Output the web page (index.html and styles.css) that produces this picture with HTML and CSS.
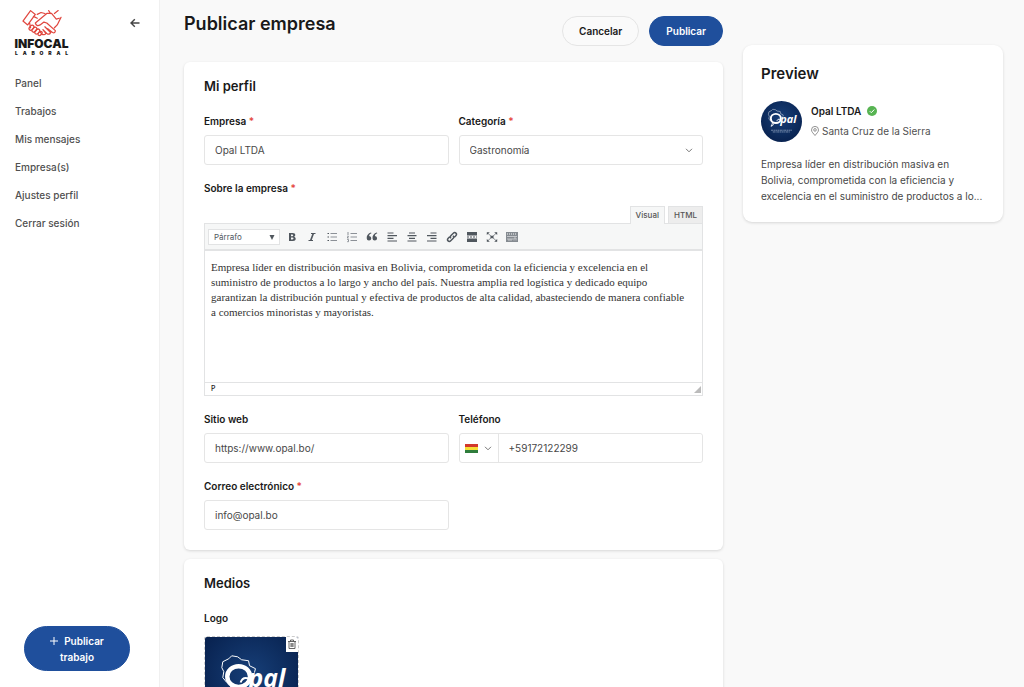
FILE: index.html
```html
<!DOCTYPE html>
<html lang="es">
<head>
<meta charset="utf-8">
<meta name="viewport" content="width=device-width, initial-scale=1">
<title>Publicar empresa</title>
<link rel="stylesheet" href="styles.css">
</head>
<body>
<svg class="defs" aria-hidden="true">
  <defs>
    <radialGradient id="navy" cx="50%" cy="40%" r="65%">
      <stop offset="0" stop-color="#173f78"/>
      <stop offset="1" stop-color="#07204d"/>
    </radialGradient>
    <symbol id="opal" viewBox="0 0 94 94">
      <rect width="94" height="94" fill="url(#navy)"/>
      <path d="M22 46l-4-5 1-6-2-4 1-6 6-3 3-3 6 1 4 3 7 1 1 5 6 3-1 4" fill="none" stroke="#fff" stroke-width="1"/>
      <ellipse cx="34" cy="40" rx="11.500" ry="10.500" fill="none" stroke="#fff" stroke-width="4.500"/>
      <path d="M27 49q-2 5-4 9 5-1 6-6M36 46q2-6 8-4" fill="none" stroke="#fff" stroke-width="2"/>
      <text x="44" y="51" class="opal-word">pal</text>
      <path d="M23 67h48M27 71h40" stroke="#a9b8d0" stroke-width="1.5" stroke-dasharray="5 1 3 1"/>
    </symbol>
  </defs>
</svg>
<div class="app">
  <aside class="sidebar">
    <div class="sidebar-head">
      <a class="brand" href="#" aria-label="Infocal Laboral">
        <svg class="brand-mark" viewBox="0 0 42 28" fill="none" stroke="#e0473f" stroke-width="1.3" stroke-linejoin="round" stroke-linecap="round">
          <path d="M9 1l5 4-8 11-5-4zM12 7l4 2M8 14l1 5M16 5l4-2 4 1M20 9l-6 5q1 4 5 2l4-3 3 1 9 8q0 3-3 2l-5-4M20 9l6-5 5 0 5 6 3-1M30 4l-2-3M41 8l-4 8-3 3M34 4l4-3M24 18l6 6q-1 3-4 1l-4-4M22 21l3 4q-1 2-4 1l-2-3"/>
          <ellipse cx="10" cy="19" rx="2" ry="3" transform="rotate(45 10 19)"/>
          <ellipse cx="13" cy="21" rx="2" ry="3" transform="rotate(45 13 21)"/>
          <ellipse cx="16" cy="23" rx="2" ry="3" transform="rotate(45 16 23)"/>
          <ellipse cx="19" cy="25" rx="1.6" ry="2.5" transform="rotate(45 19 25)"/>
        </svg>
        <span class="brand-name">INFOCAL</span>
        <span class="brand-sub"><span>L</span><span>A</span><span>B</span><span>O</span><span>R</span><span>A</span><span>L</span></span>
      </a>
      <button class="collapse" type="button" aria-label="Contraer menú">
        <svg viewBox="0 0 10 10" fill="none" stroke="currentColor" stroke-width="1.4"><path d="M9.5 5H1M4.8 1.2L1 5l3.8 3.8"/></svg>
      </button>
    </div>
    <nav class="menu">
      <a href="#">Panel</a>
      <a href="#">Trabajos</a>
      <a href="#">Mis mensajes</a>
      <a href="#">Empresa(s)</a>
      <a href="#">Ajustes perfil</a>
      <a href="#">Cerrar sesión</a>
    </nav>
    <button class="btn primary post-job" type="button">
      <svg viewBox="0 0 8 8" fill="none" stroke="currentColor"><path d="M4 0v8M0 4h8"/></svg>Publicar trabajo
    </button>
  </aside>

  <main class="main">
    <form class="editor-column">
      <header class="page-head">
        <h1>Publicar empresa</h1>
        <div class="actions">
          <button class="btn outline" type="button">Cancelar</button>
          <button class="btn primary" type="submit">Publicar</button>
        </div>
      </header>

      <section class="card">
        <h2>Mi perfil</h2>
        <div class="fields">
          <div class="field">
            <label for="empresa">Empresa <span class="req">*</span></label>
            <input id="empresa" class="control" type="text" value="Opal LTDA">
          </div>
          <div class="field">
            <label for="categoria">Categoría <span class="req">*</span></label>
            <div class="select-wrap">
              <select id="categoria" class="control"><option>Gastronomía</option></select>
              <svg class="chevron" viewBox="0 0 8 5" fill="none" stroke="#777"><path d="M1 .8l3 3 3-3"/></svg>
            </div>
          </div>
          <div class="field wide">
            <label for="sobre" id="sobre-label">Sobre la empresa <span class="req">*</span></label>
            <div class="rich">
              <div class="tabs">
                <button class="tab active" type="button">Visual</button>
                <button class="tab" type="button">HTML</button>
              </div>
              <div class="frame">
                <div class="toolbar">
                  <div class="select-wrap">
                    <select class="format" aria-label="Formato"><option>Párrafo</option></select>
                    <svg class="caret" viewBox="0 0 6 5" fill="#50575e"><path d="M.5 0h5L3 5z"/></svg>
                  </div>
                  <button type="button" aria-label="Negrita"><svg viewBox="0 0 12 12"><path class="f" fill-rule="evenodd" d="M3 2h3.800C8.400 2 9.300 2.700 9.300 4c0 .9-.5 1.500-1.300 1.800 1 .3 1.700 1 1.700 2C9.700 9.300 8.600 10 7 10H3zM5 3.500v1.700h1.200c1.400 0 1.400-1.700 0-1.700zM5 6.600v1.900h1.400c1.500 0 1.500-1.900 0-1.900z"/></svg></button>
                  <button type="button" aria-label="Cursiva"><svg viewBox="0 0 12 12"><path class="s" d="M5 2.500h4.500M2.500 9.500H7"/><path class="s thick" d="M7.300 2.500l-2.600 7"/></svg></button>
                  <button type="button" aria-label="Lista"><svg viewBox="0 0 12 12"><path class="s light" d="M4.500 2.500H11M4.500 6H11M4.500 9.500H11"/><path class="s" d="M1.500 2.500h1.500M1.500 6h1.500M1.500 9.500h1.500"/></svg></button>
                  <button type="button" aria-label="Lista numerada"><svg viewBox="0 0 12 12"><path class="s light" d="M4.500 2.500H11M4.500 6H11M4.500 9.500H11M2 1v3M1.200 5.200h1.300L1.200 7h1.500M1.200 8.500h1.300v2.200H1.200"/></svg></button>
                  <button type="button" aria-label="Cita"><svg viewBox="0 0 12 12"><path class="f" d="M5.500 2.300C4 2.800 3.300 3.700 3.100 4.900a2.300 2.300 0 1 1-2.400 2.300C.5 4.500 2.200 2.300 5 1.500zM11.300 2.300C9.800 2.800 9.100 3.700 8.900 4.900a2.300 2.300 0 1 1-2.400 2.300C6.300 4.500 8 2.300 10.800 1.500z"/></svg></button>
                  <button type="button" aria-label="Alinear a la izquierda"><svg viewBox="0 0 12 12"><path class="s" d="M1.500 2h6M1.500 4.700H11M1.500 7.300h6M1.500 10H11"/></svg></button>
                  <button type="button" aria-label="Centrar"><svg viewBox="0 0 12 12"><path class="s" d="M3 2h6M1.500 4.700h9M3 7.300h6M1.500 10h9"/></svg></button>
                  <button type="button" aria-label="Alinear a la derecha"><svg viewBox="0 0 12 12"><path class="s" d="M4.500 2h6M1 4.700h9.500M4.500 7.300h6M1 10h9.500"/></svg></button>
                  <button type="button" aria-label="Enlace"><svg viewBox="0 0 12 12"><path class="s link" d="M5 7.300C3.900 6.200 4.200 5.300 5 4.500l2.300-2.300c1.800-1.800 4.300.7 2.500 2.500L8.300 6.200M7 4.700c1.100 1.100.8 2 0 2.800L4.700 9.800C2.900 11.600.4 9.100 2.200 7.300l1.500-1.500"/></svg></button>
                  <button type="button" aria-label="Leer más"><svg viewBox="0 0 12 12"><path class="f" d="M1 1h10v3.500H1zM1 7.500h10V11H1z"/><path class="s" d="M1 6h10" stroke-dasharray="2 1"/></svg></button>
                  <button type="button" aria-label="Pantalla completa"><svg viewBox="0 0 12 12"><path class="s light" d="M1.500 2l9 8M10.500 2l-9 8"/><path class="f" d="M.8 1.300h3l-3 2.800zM11.200 1.300h-3l3 2.800zM.8 10.700h3l-3-2.800zM11.200 10.700h-3l3-2.800zM4.500 4.800h3v2.400h-3z"/></svg></button>
                  <button type="button" aria-label="Más herramientas"><svg viewBox="0 0 12 12"><path fill="#858b91" d="M0 1h12v10H0z"/><path stroke="#f6f7f7" stroke-width="1" fill="none" stroke-dasharray="1 1" d="M1 3h10"/><path stroke="#d5d7d9" stroke-width=".8" fill="none" d="M1 5.500h10M2 7v2h4V7M4 7v2M8 9.500V7h2v2.500"/></svg></button>
                </div>
                <div id="sobre" class="content" contenteditable="true" role="textbox" aria-multiline="true" aria-labelledby="sobre-label" spellcheck="false"><p>Empresa líder en distribución masiva en Bolivia, comprometida con la eficiencia y excelencia en el suministro de productos a lo largo y ancho del país. Nuestra amplia red logística y dedicado equipo garantizan la distribución puntual y efectiva de productos de alta calidad, abasteciendo de manera confiable a comercios minoristas y mayoristas.</p></div>
                <div class="status"><span>P</span><svg viewBox="0 0 7 7" fill="#bbb"><path d="M7 0v7H0z"/></svg></div>
              </div>
            </div>
          </div>
          <div class="field">
            <label for="web">Sitio web</label>
            <input id="web" class="control" type="url" value="https://www.opal.bo/">
          </div>
          <div class="field">
            <label for="tel">Teléfono</label>
            <div class="phone">
              <button class="country" type="button" aria-label="Bolivia">
                <svg class="flag" viewBox="0 0 13 9"><path fill="#d2382c" d="M0 0h13v3H0z"/><path fill="#f5de35" d="M0 3h13v3H0z"/><path fill="#2f7d3c" d="M0 6h13v3H0z"/></svg>
                <svg class="chevron-inline" viewBox="0 0 8 5" fill="none" stroke="#777"><path d="M1 .8l3 3 3-3"/></svg>
              </button>
              <input id="tel" class="control" type="tel" value="+59172122299">
            </div>
          </div>
          <div class="field">
            <label for="correo">Correo electrónico <span class="req">*</span></label>
            <input id="correo" class="control" type="email" value="info@opal.bo">
          </div>
        </div>
      </section>

      <section class="card">
        <h2>Medios</h2>
        <div class="field upload">
          <label for="logo">Logo</label>
          <input id="logo" class="file" type="file">
          <div class="thumb">
            <svg class="thumb-img" role="img" aria-label="Opal"><use href="#opal"/></svg>
            <button class="remove" type="button" aria-label="Eliminar logo">
              <svg viewBox="0 0 10 10" fill="none" stroke="#555" stroke-width=".9"><path d="M1 2.500h8M3.500 2.500V1h3v1.500M2 2.500v7h6v-7M4 4v4M5 4v4M6 4v4"/></svg>
            </button>
          </div>
        </div>
      </section>
    </form>

    <aside class="preview">
      <h2>Preview</h2>
      <div class="company">
        <svg class="avatar" role="img" aria-label="Opal"><use href="#opal"/></svg>
        <div class="company-text">
          <div class="company-name">Opal LTDA
            <svg viewBox="0 0 10 10"><circle cx="5" cy="5" r="5" fill="#57b452"/><path d="M2.800 5.200l1.500 1.500 3-3.200" fill="none" stroke="#fff"/></svg>
          </div>
          <div class="company-place">
            <svg viewBox="0 0 8 10" fill="none" stroke="#777" stroke-width=".8"><path d="M4 9.500C2.500 7.500.5 6 .5 3.900a3.500 3.500 0 0 1 7 0C7.500 6 5.500 7.500 4 9.500z"/><circle cx="4" cy="3.900" r="1.300"/></svg>Santa Cruz de la Sierra
          </div>
        </div>
      </div>
      <p>Empresa líder en distribución masiva en Bolivia, comprometida con la eficiencia y excelencia en el suministro de productos a lo...</p>
    </aside>
  </main>
</div>
</body>
</html>
```

FILE: styles.css
```css
* { box-sizing: border-box; }

body {
  margin: 0;
  background: #f9f9f9;
  color: #191919;
  font: 500 10px/14px Inter, "Liberation Sans", sans-serif;
}

h1, h2, p { margin: 0; }
button, input, select { font: inherit; color: inherit; }
button { cursor: pointer; }
svg { display: block; flex: none; }
.defs { position: absolute; width: 0; height: 0; }
.opal-word { font: italic 700 25px "Open Sans", sans-serif; fill: #fff; }

.app { display: flex; height: 100vh; }

/* Sidebar */
.sidebar {
  display: flex;
  flex-direction: column;
  flex: none;
  width: 160px;
  padding: 9px 15px 16px;
  background: #fff;
  border-right: 1px solid #f0f0f0;
}
.sidebar-head { display: flex; justify-content: space-between; align-items: flex-start; }
.brand {
  display: flex;
  flex-direction: column;
  align-items: center;
  width: 53px;
  color: #191919;
  text-decoration: none;
}
.brand-mark { width: 40px; height: 28px; }
.brand-name { font-size: 12px; font-weight: 900; line-height: 13px; }
.brand-sub {
  display: flex;
  justify-content: space-between;
  align-self: stretch;
  font-size: 5px;
  font-weight: 900;
  line-height: 7px;
}
.collapse { margin: 9px 4px 0 0; padding: 0; border: 0; background: none; color: #444; }
.collapse svg { width: 10px; height: 10px; }
.menu { display: flex; flex-direction: column; gap: 14px; margin-top: 19px; }
.menu a { color: #505050; text-decoration: none; }

/* Buttons */
.btn {
  padding: 0 16px;
  height: 30px;
  border: 1px solid #1f4f9c;
  border-radius: 24px;
  font-weight: 600;
}
.primary { background: #1f4f9c; color: #fff; }
.outline { background: #fafafa; border-color: #e5e5e5; }
.post-job { height: 45px; margin: auto 14px 0 9px; padding: 0 20px; line-height: 16px; }
.post-job svg { display: inline-block; width: 8px; height: 8px; margin-right: 6px; }

/* Main area */
.main {
  flex: 1;
  min-width: 0;
  display: grid;
  grid-template-columns: minmax(0, 1fr) 260px;
  gap: 20px;
  align-items: start;
  padding: 0 21px 0 24px;
  overflow-y: auto;
  scrollbar-width: none;
}
.page-head { display: flex; justify-content: space-between; padding: 12px 0 16px; }
h1 { font-size: 18px; font-weight: 600; line-height: 24px; }
.actions { display: flex; gap: 10px; margin-top: 4px; }

.card, .preview {
  background: #fff;
  border-radius: 6px;
  box-shadow: 0 1px 3px rgba(0, 0, 0, .14);
}
.card { padding: 15px 20px 20px; margin-bottom: 9px; }
.card h2 { margin-bottom: 19px; font-size: 13px; font-weight: 600; line-height: 18px; }

/* Fields */
.fields { display: grid; grid-template-columns: 1fr 1fr; gap: 16px 10px; }
.field { display: flex; flex-direction: column; gap: 7px; min-width: 0; }
.field label { font-weight: 600; }
.wide { grid-column: 1 / -1; gap: 11px; }
.upload { gap: 11px; }
.req { color: #e5483f; }
.control {
  width: 100%;
  height: 30px;
  padding: 0 10px;
  border: 1px solid #e5e5e5;
  border-radius: 3px;
  background: #fff;
  color: #484848;
  font-weight: 400;
  appearance: none;
}
.select-wrap { position: relative; }
.chevron { position: absolute; right: 10px; top: 13px; width: 8px; height: 5px; pointer-events: none; }
.phone { display: flex; border: 1px solid #e5e5e5; border-radius: 3px; }
.phone .control { height: 28px; border: 0; }
.country {
  display: flex;
  align-items: center;
  gap: 6px;
  padding: 0 6px 0 5px;
  border: 0;
  border-right: 1px solid #e5e5e5;
  background: none;
}
.flag { width: 13px; height: 9px; }
.chevron-inline { width: 8px; height: 5px; }

/* Rich text editor */
.tabs { display: flex; justify-content: flex-end; gap: 3px; }
.tab {
  height: 17px;
  padding: 0 5px;
  border: 1px solid #e2e3e4;
  border-bottom: 0;
  background: #ededed;
  color: #555;
  font-size: 8px;
  font-weight: 500;
  line-height: 14px;
}
.tab.active { height: 18px; margin-bottom: -1px; padding-bottom: 2px; background: #f6f7f7; z-index: 1; }
.frame { border: 1px solid #e2e3e4; }
.toolbar {
  display: flex;
  align-items: center;
  height: 27px;
  padding: 0 3px;
  background: #f6f7f7;
  border-bottom: 2px solid #e2e3e4;
}
.format {
  display: block;
  width: 72px;
  height: 16px;
  padding: 0 5px;
  border: 1px solid #e2e3e4;
  border-radius: 0;
  background: #fff;
  color: #50575e;
  font-size: 8px;
  font-weight: 400;
  appearance: none;
}
.caret { position: absolute; right: 5px; top: 6px; width: 6px; height: 5px; pointer-events: none; }
.toolbar button { flex: none; width: 20px; padding: 0 4px; border: 0; background: none; }
.toolbar .select-wrap { margin-right: 2px; }
.toolbar button svg { width: 12px; height: 12px; }
.f { fill: #50575e; }
.s { fill: none; stroke: #50575e; stroke-width: 1.2; }
.thick { stroke-width: 1.7; }
.link { stroke-width: 1.5; }
.light { stroke: #8c9197; stroke-width: 1; }
.content {
  height: 131px;
  padding: 9px 12px 9px 6px;
  color: #333;
  font: 400 11px/15px Georgia, "Liberation Serif", serif;
  outline: none;
}
.status {
  display: flex;
  justify-content: space-between;
  align-items: center;
  height: 13px;
  padding: 0 1px 0 6px;
  border-top: 1px solid #e2e3e4;
  font-size: 7px;
  line-height: 10px;
}
.status svg { width: 7px; height: 7px; }

/* Logo upload */
.file { display: none; }
.thumb { position: relative; width: 95px; height: 95px; border: 1px dashed #ccc; border-radius: 3px; overflow: hidden; }
.thumb-img { width: 100%; height: 100%; }
.remove { position: absolute; top: 0; right: 0; padding: 2px 1px 3px; border: 0; background: #fff; }
.remove svg { width: 10px; height: 10px; }

/* Preview */
.preview { margin-top: 45px; padding: 19px 18px 18px; border-radius: 9px; }
.preview h2 { font-size: 15px; font-weight: 600; line-height: 20px; }
.company { display: flex; gap: 9px; margin: 17px 0 14px; }
.avatar { width: 41px; height: 41px; border-radius: 50%; }
.company-text { display: flex; flex-direction: column; gap: 6px; padding-top: 3px; }
.company-name { display: flex; align-items: center; gap: 6px; font-weight: 600; }
.company-name svg { width: 10px; height: 10px; }
.company-place { display: flex; align-items: center; gap: 3px; color: #505050; font-weight: 400; }
.company-place svg { width: 8px; height: 10px; }
.preview p { color: #484848; font-weight: 400; line-height: 16px; }
```
